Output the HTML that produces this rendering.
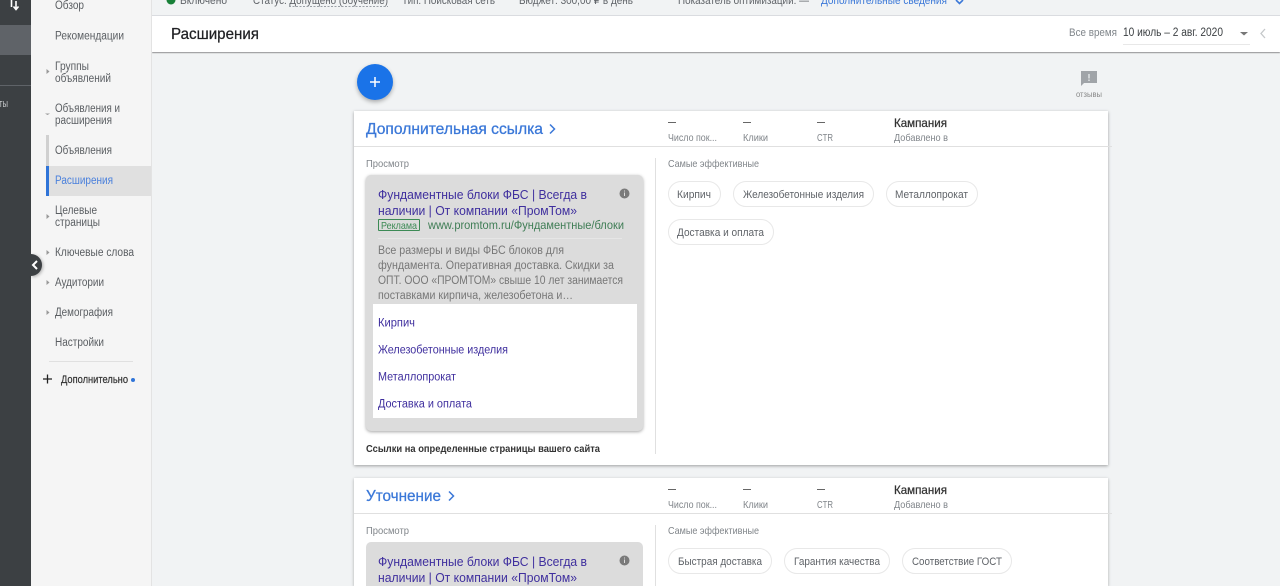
<!DOCTYPE html>
<html><head><meta charset="utf-8">
<style>
html,body{margin:0;padding:0;width:1280px;height:586px;overflow:hidden;background:#f1f3f4}
.b{position:absolute}
svg{position:absolute;left:0;top:0}
text{font-family:"Liberation Sans","DejaVu Sans",sans-serif;white-space:pre}
.n{font-size:11.5px;fill:#5a5e62}
.g{font-size:10.5px;fill:#80858a}
.t{font-size:13px;fill:#3f2f9e}
.d{font-size:11.5px;fill:#777}
.c{font-size:11px;fill:#5f6368}
.top{font-size:11px;fill:#5f6368}
.h{font-size:16px;fill:#3b78d8;stroke:#3b78d8;stroke-width:.3}
.k{font-size:12px;fill:#333;stroke:#333;stroke-width:.25}
.l{font-size:11.5px;fill:#3f2f9e}
</style></head><body>
<div class="b" style="left:0;top:0;width:31px;height:586px;background:#3c4043"></div>
<div class="b" style="left:0;top:25px;width:31px;height:30px;background:#5f6368"></div>
<div class="b" style="left:0;top:85px;width:31px;height:1px;background:#5f6368"></div>
<div class="b" style="left:31px;top:0;width:121px;height:586px;background:#f5f5f5;border-right:1px solid #e3e3e3;box-sizing:border-box"></div>
<div class="b" style="left:46px;top:135px;width:3px;height:31px;background:#d0d0d0"></div>
<div class="b" style="left:46px;top:166px;width:105px;height:30px;background:#e0e0e0"></div>
<div class="b" style="left:46px;top:166px;width:3px;height:30px;background:#2f74d8"></div>
<div class="b" style="left:49px;top:361px;width:84px;height:1px;background:#e0e0e0"></div>
<div class="b" style="left:31px;top:254px;width:11px;height:22px;border-radius:0 11px 11px 0;background:#3c4043;box-shadow:1px 1px 3px rgba(0,0,0,.3)"></div>
<div class="b" style="left:20px;top:254px;width:11px;height:22px;background:#3c4043"></div>
<div class="b" style="left:152px;top:15px;width:1128px;height:1px;background:#dadce0"></div>
<div class="b" style="left:152px;top:16px;width:1128px;height:36px;background:#fff;box-shadow:0 1px 1px rgba(0,0,0,.4);clip-path:inset(0 0 -4px 0)"></div>
<div class="b" style="left:1123px;top:44px;width:127px;height:1px;background:#e8e8e8"></div>
<div class="b" style="left:357px;top:64px;width:36px;height:36px;border-radius:50%;background:#1a73e8;box-shadow:0 2px 4px rgba(0,0,0,.3)"></div>

<div class="b" style="left:354px;top:111px;width:754px;height:354px;background:#fff;box-shadow:0 1px 3px rgba(0,0,0,.35)"></div>
<div class="b" style="left:354px;top:146px;width:758px;height:1px;background:#e0e0e0"></div>
<div class="b" style="left:655px;top:158px;width:1px;height:296px;background:#e0e0e0"></div>
<div class="b" style="left:366px;top:175px;width:277px;height:256px;border-radius:5px;background:#dcdcdc;box-shadow:0 1px 3px rgba(0,0,0,.35)"></div>
<div class="b" style="left:378px;top:238px;width:244px;height:1px;background:#e6e6e6"></div>
<div class="b" style="left:373px;top:304px;width:264px;height:114px;background:#fff"></div>
<div class="b" style="left:378px;top:219px;width:40px;height:10px;border:1px solid #3c8a55;border-radius:1px"></div>

<div class="b" style="left:354px;top:478px;width:754px;height:108px;background:#fff;box-shadow:0 1px 3px rgba(0,0,0,.3)"></div>
<div class="b" style="left:354px;top:513px;width:758px;height:1px;background:#e0e0e0"></div>
<div class="b" style="left:655px;top:525px;width:1px;height:61px;background:#e0e0e0"></div>
<div class="b" style="left:366px;top:542px;width:277px;height:44px;border-radius:5px 5px 0 0;background:#dcdcdc"></div>

<div class="b" style="left:668px;top:181px;width:53px;height:26px;box-sizing:border-box;border:1px solid #e8e8e8;border-radius:13px"></div>
<div class="b" style="left:733px;top:181px;width:141px;height:26px;box-sizing:border-box;border:1px solid #e8e8e8;border-radius:13px"></div>
<div class="b" style="left:886px;top:181px;width:92px;height:26px;box-sizing:border-box;border:1px solid #e8e8e8;border-radius:13px"></div>
<div class="b" style="left:668px;top:219px;width:106px;height:26px;box-sizing:border-box;border:1px solid #e8e8e8;border-radius:13px"></div>
<div class="b" style="left:668px;top:548px;width:104px;height:26px;box-sizing:border-box;border:1px solid #e8e8e8;border-radius:13px"></div>
<div class="b" style="left:784px;top:548px;width:106px;height:26px;box-sizing:border-box;border:1px solid #e8e8e8;border-radius:13px"></div>
<div class="b" style="left:902px;top:548px;width:110px;height:26px;box-sizing:border-box;border:1px solid #e8e8e8;border-radius:13px"></div>

<svg width="1280" height="586" viewBox="0 0 1280 586">
<!-- dark rail -->
<path d="M11.500 0v7M16 1v8M13.500 6.500L16 9.500l2.500-3" stroke="#fff" stroke-width="1.600" fill="none"/>
<text x="-1" y="107" font-size="11" fill="#c4c7c9" textLength="9" lengthAdjust="spacingAndGlyphs">ты</text>
<path d="M37 261l-4 4 4 4" stroke="#fff" stroke-width="2" fill="none"/>

<!-- top status -->
<circle cx="171" cy="0" r="4.500" fill="#188038"/>
<text class="top" x="180" y="4" textLength="47" lengthAdjust="spacingAndGlyphs">Включено</text>
<text class="top" x="253" y="4" textLength="135" lengthAdjust="spacingAndGlyphs">Статус: Допущено (обучение)</text>
<text class="top" x="402" y="4" textLength="93" lengthAdjust="spacingAndGlyphs">Тип: Поисковая сеть</text>
<text class="top" x="519" y="4" textLength="114" lengthAdjust="spacingAndGlyphs">Бюджет: 300,00 ₽ в день</text>
<text class="top" x="678" y="4" textLength="131" lengthAdjust="spacingAndGlyphs">Показатель оптимизации: —</text>
<text x="821" y="4" font-size="11" fill="#3b78d8" textLength="126" lengthAdjust="spacingAndGlyphs">Дополнительные сведения</text>
<path d="M289 6.500h99" stroke="#9aa0a6" stroke-width="1" stroke-dasharray="2 1.500"/>
<path d="M956 0l3.500 3.500L963 0" stroke="#3b78d8" stroke-width="1.600" fill="none"/>

<!-- nav -->
<text class="n" x="55" y="9" textLength="29" lengthAdjust="spacingAndGlyphs">Обзор</text>
<text class="n" x="55" y="39.500" textLength="69" lengthAdjust="spacingAndGlyphs">Рекомендации</text>
<text class="n" x="55" y="70" textLength="34" lengthAdjust="spacingAndGlyphs">Группы</text>
<text class="n" x="55" y="82" textLength="56" lengthAdjust="spacingAndGlyphs">объявлений</text>
<text class="n" x="55" y="112" textLength="65" lengthAdjust="spacingAndGlyphs">Объявления и</text>
<text class="n" x="55" y="124" textLength="57" lengthAdjust="spacingAndGlyphs">расширения</text>
<text class="n" x="55" y="154" textLength="57" lengthAdjust="spacingAndGlyphs">Объявления</text>
<text x="55" y="184" font-size="11.500" fill="#4a80dc" textLength="58" lengthAdjust="spacingAndGlyphs">Расширения</text>
<text class="n" x="55" y="214" textLength="42" lengthAdjust="spacingAndGlyphs">Целевые</text>
<text class="n" x="55" y="226" textLength="45" lengthAdjust="spacingAndGlyphs">страницы</text>
<text class="n" x="55" y="256" textLength="79" lengthAdjust="spacingAndGlyphs">Ключевые слова</text>
<text class="n" x="55" y="286" textLength="49" lengthAdjust="spacingAndGlyphs">Аудитории</text>
<text class="n" x="55" y="316" textLength="58" lengthAdjust="spacingAndGlyphs">Демография</text>
<text class="n" x="55" y="346" textLength="49" lengthAdjust="spacingAndGlyphs">Настройки</text>
<text x="61" y="383" font-size="11" fill="#333" stroke="#333" stroke-width=".2" textLength="67" lengthAdjust="spacingAndGlyphs">Дополнительно</text>
<circle cx="133" cy="380" r="2" fill="#2f74d8"/>
<path d="M43 379h9M47.500 374.500v9" stroke="#222" stroke-width="1.300"/>
<g fill="#999">
<path d="M46.500 69l3 2.500-3 2.500z"/><path d="M46.500 214l3 2.500-3 2.500z"/><path d="M46.500 250l3 2.500-3 2.500z"/>
<path d="M46.500 280l3 2.500-3 2.500z"/><path d="M46.500 310l3 2.500-3 2.500z"/><path d="M45 113.500h5l-2.500 1.500z"/>
</g>

<!-- header -->
<text x="171" y="39" font-size="16" fill="#202124" stroke="#202124" stroke-width=".25" textLength="88" lengthAdjust="spacingAndGlyphs">Расширения</text>
<text x="1069" y="36" font-size="11" fill="#80868b" textLength="48" lengthAdjust="spacingAndGlyphs">Все время</text>
<text x="1123" y="36" font-size="11.500" fill="#3c4043" textLength="100" lengthAdjust="spacingAndGlyphs">10 июль – 2 авг. 2020</text>
<path d="M1240 32h8l-4 3.500z" fill="#777"/>
<path d="M1265 29l-4 4.500 4 4.500" stroke="#c4c7c9" stroke-width="1.300" fill="none"/>

<!-- FAB -->
<path d="M370 82h10M375 77v10" stroke="#fff" stroke-width="1.500"/>

<!-- feedback -->
<path d="M1081 71h16v12h-13l-3 3z" fill="#a0a4a8"/>
<path d="M1089 74v4.500M1089 79.500v1.500" stroke="#f1f3f4" stroke-width="1.200"/>
<text x="1076" y="97" font-size="8.500" fill="#888" textLength="26" lengthAdjust="spacingAndGlyphs">отзывы</text>

<!-- card 1 -->
<text class="h" x="366" y="134" textLength="177" lengthAdjust="spacingAndGlyphs">Дополнительная ссылка</text>
<path d="M550 124.500l4.500 4.500-4.500 4.500" stroke="#3b78d8" stroke-width="1.500" fill="none"/>
<path d="M668 122.500h8M743 122.500h8M817 122.500h8" stroke="#666" stroke-width="1"/>
<text class="g" x="668" y="141" textLength="49" lengthAdjust="spacingAndGlyphs">Число пок...</text>
<text class="g" x="743" y="141" textLength="25" lengthAdjust="spacingAndGlyphs">Клики</text>
<text class="g" x="817" y="141" textLength="16" lengthAdjust="spacingAndGlyphs">CTR</text>
<text class="k" x="894" y="127" textLength="53" lengthAdjust="spacingAndGlyphs">Кампания</text>
<text class="g" x="894" y="141" textLength="54" lengthAdjust="spacingAndGlyphs">Добавлено в</text>
<text class="g" x="366" y="167" textLength="43" lengthAdjust="spacingAndGlyphs">Просмотр</text>
<text class="g" x="668" y="167" textLength="91" lengthAdjust="spacingAndGlyphs">Самые эффективные</text>
<text class="c" x="677" y="198" textLength="34" lengthAdjust="spacingAndGlyphs">Кирпич</text>
<text class="c" x="743" y="198" textLength="121" lengthAdjust="spacingAndGlyphs">Железобетонные изделия</text>
<text class="c" x="895" y="198" textLength="73" lengthAdjust="spacingAndGlyphs">Металлопрокат</text>
<text class="c" x="677" y="236" textLength="87" lengthAdjust="spacingAndGlyphs">Доставка и оплата</text>

<text class="t" x="378" y="199" textLength="209" lengthAdjust="spacingAndGlyphs">Фундаментные блоки ФБС | Всегда в</text>
<text class="t" x="378" y="215" textLength="199" lengthAdjust="spacingAndGlyphs">наличии | От компании «ПромТом»</text>
<circle cx="624.500" cy="193.500" r="5" fill="#7a7a7a"/>
<path d="M624.500 192.500v3.500M624.500 190.500v1" stroke="#dcdcdc" stroke-width="1"/>
<text x="381" y="229" font-size="10.500" fill="#3c8a55" textLength="36" lengthAdjust="spacingAndGlyphs">Реклама</text>
<text x="428" y="229" font-size="12" fill="#3f7d55" textLength="196" lengthAdjust="spacingAndGlyphs">www.promtom.ru/Фундаментные/блоки</text>
<text class="d" x="378" y="254" textLength="186" lengthAdjust="spacingAndGlyphs">Все размеры и виды ФБС блоков для</text>
<text class="d" x="378" y="269" textLength="236" lengthAdjust="spacingAndGlyphs">фундамента. Оперативная доставка. Скидки за</text>
<text class="d" x="378" y="284" textLength="245" lengthAdjust="spacingAndGlyphs">ОПТ. ООО «ПРОМТОМ» свыше 10 лет занимается</text>
<text class="d" x="378" y="299" textLength="195" lengthAdjust="spacingAndGlyphs">поставками кирпича, железобетона и…</text>
<text class="l" x="378" y="326.500" textLength="37" lengthAdjust="spacingAndGlyphs">Кирпич</text>
<text class="l" x="378" y="353.500" textLength="130" lengthAdjust="spacingAndGlyphs">Железобетонные изделия</text>
<text class="l" x="378" y="380.500" textLength="78" lengthAdjust="spacingAndGlyphs">Металлопрокат</text>
<text class="l" x="378" y="407.500" textLength="94" lengthAdjust="spacingAndGlyphs">Доставка и оплата</text>
<text x="366" y="452" font-size="10.500" font-weight="bold" fill="#333" textLength="234" lengthAdjust="spacingAndGlyphs">Ссылки на определенные страницы вашего сайта</text>

<!-- card 2 -->
<text class="h" x="366" y="501" textLength="75" lengthAdjust="spacingAndGlyphs">Уточнение</text>
<path d="M449 491.500l4.500 4.500-4.500 4.500" stroke="#3b78d8" stroke-width="1.500" fill="none"/>
<path d="M668 489.500h8M743 489.500h8M817 489.500h8" stroke="#666" stroke-width="1"/>
<text class="g" x="668" y="508" textLength="49" lengthAdjust="spacingAndGlyphs">Число пок...</text>
<text class="g" x="743" y="508" textLength="25" lengthAdjust="spacingAndGlyphs">Клики</text>
<text class="g" x="817" y="508" textLength="16" lengthAdjust="spacingAndGlyphs">CTR</text>
<text class="k" x="894" y="494" textLength="53" lengthAdjust="spacingAndGlyphs">Кампания</text>
<text class="g" x="894" y="508" textLength="54" lengthAdjust="spacingAndGlyphs">Добавлено в</text>
<text class="g" x="366" y="534" textLength="43" lengthAdjust="spacingAndGlyphs">Просмотр</text>
<text class="g" x="668" y="534" textLength="91" lengthAdjust="spacingAndGlyphs">Самые эффективные</text>
<text class="c" x="678" y="565" textLength="84" lengthAdjust="spacingAndGlyphs">Быстрая доставка</text>
<text class="c" x="794" y="565" textLength="86" lengthAdjust="spacingAndGlyphs">Гарантия качества</text>
<text class="c" x="912" y="565" textLength="90" lengthAdjust="spacingAndGlyphs">Соответствие ГОСТ</text>
<text class="t" x="378" y="566" textLength="209" lengthAdjust="spacingAndGlyphs">Фундаментные блоки ФБС | Всегда в</text>
<text class="t" x="378" y="582" textLength="199" lengthAdjust="spacingAndGlyphs">наличии | От компании «ПромТом»</text>
<circle cx="624.500" cy="560.500" r="5" fill="#7a7a7a"/>
<path d="M624.500 559.500v3.500M624.500 557.500v1" stroke="#dcdcdc" stroke-width="1"/>
</svg>
</body></html>
